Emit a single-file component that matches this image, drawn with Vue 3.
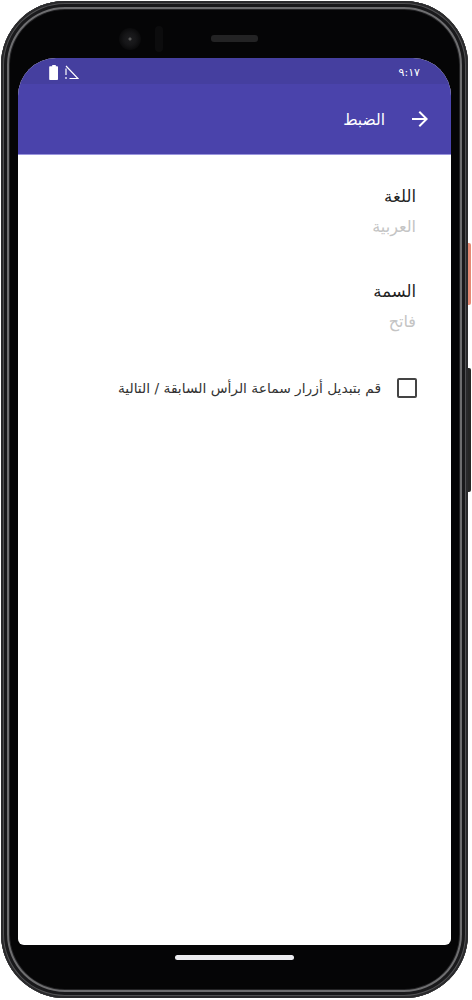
<script setup>
const settings = [
  { label: 'اللغة', value: 'العربية' },
  { label: 'السمة', value: 'فاتح' },
]
</script>

<template>
  <div class="page">
    <div class="phone">
      <span class="side-btn power"></span>
      <span class="side-btn volume"></span>
      <div class="rim">
        <div class="bezel">
          <div class="top-bezel">
            <span class="camera"></span>
            <span class="sensor"></span>
            <span class="speaker"></span>
          </div>
          <div class="screen">
            <div class="status" dir="ltr">
              <div class="status-icons">
                <svg width="10" height="15" viewBox="0 0 10 15"><path d="M3.2 0h3.6v1.2h1.2c.6 0 1 .4 1 1V14c0 .6-.4 1-1 1H1.200c-.6 0-1-.4-1-1V2.200c0-.6.4-1 1-1h2z" fill="#fff"/></svg>
                <svg width="14" height="15" viewBox="0 0 14 15" fill="none" stroke="#fff" stroke-width="1.200"><path d="M1 1L13 13.500H4.500"/><path d="M1 3.500V10M1 12v2"/></svg>
              </div>
              <span class="time">٩:١٧</span>
            </div>
            <header class="toolbar">
              <svg class="back" width="24" height="24" viewBox="0 0 24 24" fill="#fff"><path d="M12 4l-1.410 1.410L16.170 11H4v2h12.170l-5.580 5.590L12 20l8-8z"/></svg>
              <span class="title">الضبط</span>
            </header>
            <main class="content">
              <div v-for="item in settings" :key="item.label" class="setting">
                <div class="label">{{ item.label }}</div>
                <div class="value">{{ item.value }}</div>
              </div>
              <label class="check-row">
                <span class="box"></span>
                <span class="check-text">قم بتبديل أزرار سماعة الرأس السابقة / التالية</span>
              </label>
            </main>
          </div>
          <div class="nav-area"><span class="home"></span></div>
        </div>
      </div>
    </div>
  </div>
</template>

<style scoped>
.page {
  width: 472px;
  height: 1000px;
  background: #fff;
  padding: 1px 0 0 1px;
  box-sizing: border-box;
  overflow: hidden;
}
.phone {
  position: relative;
  width: 467px;
  height: 997px;
}
.side-btn {
  position: absolute;
  right: -3px;
  width: 4px;
  border-radius: 0 2px 2px 0;
}
.power {
  top: 242px;
  height: 62px;
  background: #e58a74;
}
.volume {
  top: 367px;
  height: 124px;
  background: #262626;
}
.rim {
  position: relative;
  height: 100%;
  box-sizing: border-box;
  border-radius: 64px;
  background: #232325;
  box-shadow: inset 0 0 0 2px #2a2a2c, inset 0 0 0 3px #515153, inset 0 0 0 6px #19191b, inset 0 0 0 8px #6e6e70;
  padding: 9px;
}
.bezel {
  height: 100%;
  box-sizing: border-box;
  background: #050506;
  border-radius: 55px;
  padding: 0 8px;
  display: flex;
  flex-direction: column;
}
.top-bezel {
  height: 48px;
  flex: none;
  display: flex;
  align-items: center;
  padding: 9px 0 0 101px;
  box-sizing: border-box;
}
.camera {
  width: 22px;
  height: 22px;
  border-radius: 50%;
  background: radial-gradient(circle, #555 0 1px, #1b1b1d 2px, #161618 6px, #0a0a0b 11px);
}
.sensor {
  width: 8px;
  height: 26px;
  margin-left: 14px;
  border-radius: 4px;
  background: #0c0c0d;
}
.speaker {
  width: 47px;
  height: 7px;
  margin-left: 48px;
  border-radius: 3px;
  background: #232324;
}
.screen {
  flex: 1;
  min-height: 0;
  background: #fff;
  border-radius: 38px 38px 6px 6px;
  overflow: hidden;
  display: flex;
  flex-direction: column;
}
.status {
  height: 26px;
  flex: none;
  background: #453f9f;
  color: #fff;
  display: flex;
  align-items: center;
  justify-content: space-between;
  padding: 2px 31px 0 31px;
  box-sizing: border-box;
  font-family: "DejaVu Sans", sans-serif;
  font-size: 11px;
}
.status-icons {
  display: flex;
  align-items: center;
  gap: 6px;
}
.toolbar {
  height: 71px;
  flex: none;
  background: #4a43ab;
  border-bottom: 1px solid #9a95dd;
  box-sizing: border-box;
  direction: rtl;
  display: flex;
  align-items: center;
  padding: 0 19px 0 0;
  color: #fff;
}
.title {
  margin-right: 23px;
  margin-top: 2px;
  font-size: 15.5px;
  font-family: "DejaVu Sans", sans-serif;
}
.content {
  flex: 1;
  direction: rtl;
  padding: 31px 35px 0 0;
  font-family: "DejaVu Sans", sans-serif;
}
.setting {
  height: 95px;
}
.label {
  font-size: 16.5px;
  line-height: 22px;
  color: #1f1f1f;
}
.value {
  margin-top: 8px;
  font-size: 16px;
  line-height: 22px;
  color: #c4c4c4;
}
.check-row {
  display: flex;
  align-items: center;
  gap: 16px;
  height: 24px;
}
.box {
  width: 16px;
  height: 16px;
  margin-right: -1px;
  flex: none;
  border: 2px solid #444;
  border-radius: 2px;
}
.check-text {
  font-size: 13.8px;
  color: #333;
  white-space: nowrap;
}
.nav-area {
  height: 44px;
  flex: none;
  display: flex;
  justify-content: center;
  padding-top: 10px;
  box-sizing: border-box;
}
.home {
  width: 119px;
  height: 5px;
  border-radius: 3px;
  background: #ececf0;
}
</style>
